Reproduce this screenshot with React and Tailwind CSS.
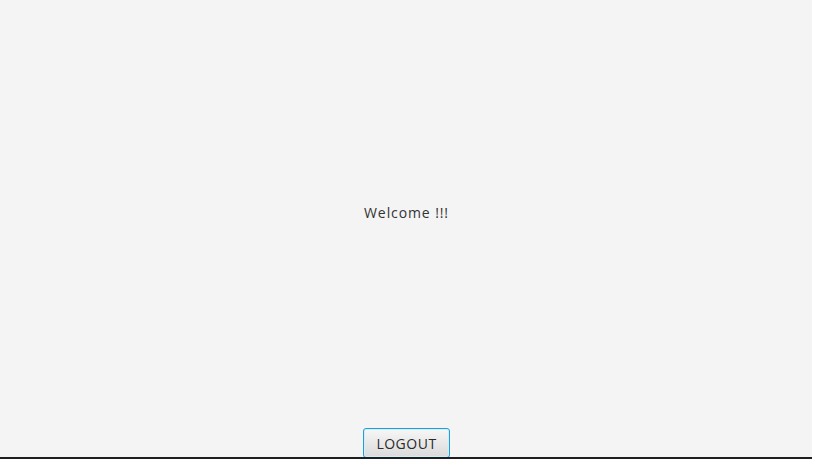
export default function App() {
  return (
    <div className="w-[814px] h-[459px] flex bg-white overflow-hidden" style={{ fontFamily: '"Open Sans", "Noto Sans", sans-serif' }}>
      <div className="w-[812px] h-full flex flex-col bg-[#f4f4f4]">
        <div className="h-[457px] flex flex-col items-center">
          <div className="h-[203px]" />
          <div className="text-[14px] leading-[20px] text-[#333333] tracking-[0.9px] ml-[1px]">Welcome !!!</div>
          <div className="flex-1" />
          <button className="w-[87px] h-[30px] -mb-[1px] rounded-[3px] border border-[#1f9fd8] bg-gradient-to-b from-[#f7f7f7] to-[#dadada] shadow-[inset_0_0_0_1px_#cfeefb] text-[14px] leading-[18px] text-[#2b2b2b] tracking-[0.5px] pt-[1px] ml-[1px]">
            LOGOUT
          </button>
        </div>
        <div className="h-[2px] bg-[#1e1e1e]" />
      </div>
      <div className="w-[2px] h-full bg-white" />
    </div>
  );
}
